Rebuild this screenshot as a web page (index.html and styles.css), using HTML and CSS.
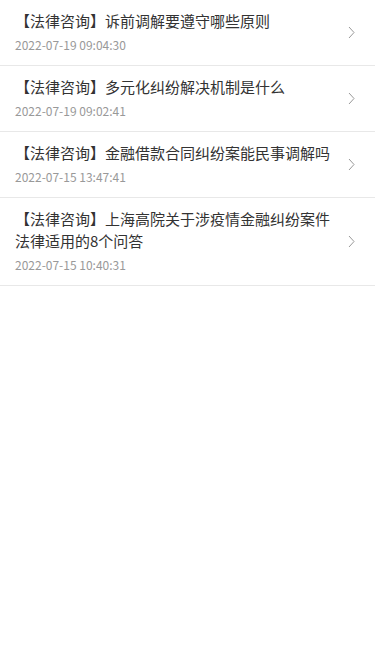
FILE: index.html
```html
<!DOCTYPE html>
<html lang="zh-CN">
<head>
<meta charset="utf-8">
<meta name="viewport" content="width=device-width, initial-scale=1">
<link rel="stylesheet" href="styles.css">
</head>
<body>
<ul class="list">
  <li class="item">
    <div class="content">
      <div class="title">【法律咨询】诉前调解要遵守哪些原则</div>
      <div class="date">2022-07-19 09:04:30</div>
    </div>
    <svg class="arrow" width="7" height="13" viewBox="0 0 7 13"><path d="M1 1 L6 6.5 L1 12" fill="none" stroke="#999" stroke-width="1"/></svg>
  </li>
  <li class="item">
    <div class="content">
      <div class="title">【法律咨询】多元化纠纷解决机制是什么</div>
      <div class="date">2022-07-19 09:02:41</div>
    </div>
    <svg class="arrow" width="7" height="13" viewBox="0 0 7 13"><path d="M1 1 L6 6.5 L1 12" fill="none" stroke="#999" stroke-width="1"/></svg>
  </li>
  <li class="item">
    <div class="content">
      <div class="title">【法律咨询】金融借款合同纠纷案能民事调解吗</div>
      <div class="date">2022-07-15 13:47:41</div>
    </div>
    <svg class="arrow" width="7" height="13" viewBox="0 0 7 13"><path d="M1 1 L6 6.5 L1 12" fill="none" stroke="#999" stroke-width="1"/></svg>
  </li>
  <li class="item">
    <div class="content">
      <div class="title">【法律咨询】上海高院关于涉疫情金融纠纷案件法律适用的8个问答</div>
      <div class="date">2022-07-15 10:40:31</div>
    </div>
    <svg class="arrow" width="7" height="13" viewBox="0 0 7 13"><path d="M1 1 L6 6.5 L1 12" fill="none" stroke="#999" stroke-width="1"/></svg>
  </li>
</ul>
</body>
</html>
```
FILE: styles.css
```css
html, body {
  margin: 0;
  padding: 0;
  background: #fff;
  font-family: "Noto Sans CJK SC", "Noto Sans", sans-serif;
}
.list {
  list-style: none;
  margin: 0;
  padding: 0;
}
.item {
  display: flex;
  align-items: center;
  padding: 10px 20px 10px 15px;
  border-bottom: 1px solid #e8e8e8;
}
.content {
  flex: 1;
  min-width: 0;
  padding-right: 10px;
}
.title {
  font-size: 15px;
  line-height: 22px;
  color: #333;
}
.date {
  margin-top: 3px;
  font-size: 12px;
  line-height: 20px;
  color: #999;
}
.arrow {
  flex: none;
  display: block;
}
```
